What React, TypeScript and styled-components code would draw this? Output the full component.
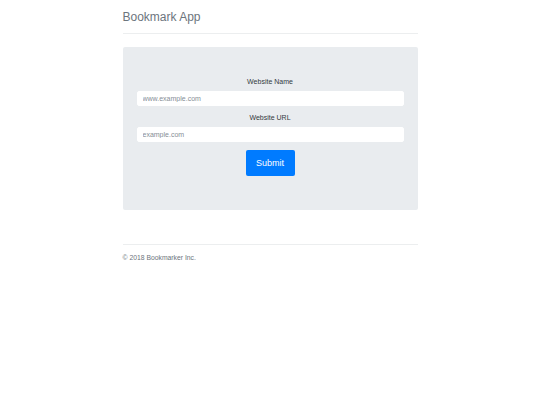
import styled, { createGlobalStyle } from "styled-components";

const GlobalStyle = createGlobalStyle`
  body {
    margin: 0;
    background: #fff;
    font-family: "Liberation Sans", Arial, sans-serif;
    color: #212529;
  }
`;

const Container = styled.div`
  width: 295px;
  margin: 0 auto;
`;

const Header = styled.header`
  padding: 9px 0 8px;
  border-bottom: 1px solid #eceeef;
  h3 {
    margin: 0;
    font-size: 12px;
    line-height: 16px;
    font-weight: 400;
    color: #6c757d;
  }
`;

const Jumbotron = styled.div`
  margin-top: 13px;
  padding: 30px 14px 34px;
  background-color: #e9ecef;
  border-radius: 2px;
`;

const Form = styled.form`
  display: flex;
  flex-direction: column;
  align-items: center;
`;

const FormGroup = styled.div`
  width: 100%;
  display: flex;
  flex-direction: column;
  align-items: center;
  & + & {
    margin-top: 7px;
  }
  label {
    font-size: 7px;
    line-height: 10px;
    margin-bottom: 4px;
    color: #343a40;
  }
  input {
    box-sizing: border-box;
    width: 100%;
    height: 15px;
    padding: 0 5px;
    border: 1px solid #fff;
    border-radius: 2px;
    background: #fff;
    font-family: inherit;
    font-size: 7px;
    outline: none;
    &::placeholder {
      color: #868e96;
    }
  }
`;

const SubmitButton = styled.button`
  margin-top: 8px;
  width: 49px;
  height: 26px;
  border: none;
  border-radius: 2px;
  background-color: #007bff;
  color: #fff;
  font-family: inherit;
  font-size: 9px;
  cursor: pointer;
`;

const Footer = styled.footer`
  margin-top: 34px;
  padding-top: 8px;
  border-top: 1px solid #eceeef;
  font-size: 6.8px;
  line-height: 10px;
  color: #6c757d;
`;

const App = () => {
  return (
    <>
      <GlobalStyle />
      <Container>
        <Header>
          <h3>Bookmark App</h3>
        </Header>
        <Jumbotron>
          <Form onSubmit={(e) => e.preventDefault()}>
            <FormGroup>
              <label htmlFor="siteName">Website Name</label>
              <input id="siteName" type="text" placeholder="www.example.com" />
            </FormGroup>
            <FormGroup>
              <label htmlFor="siteUrl">Website URL</label>
              <input id="siteUrl" type="text" placeholder="example.com" />
            </FormGroup>
            <SubmitButton type="submit">Submit</SubmitButton>
          </Form>
        </Jumbotron>
        <Footer>© 2018 Bookmarker Inc.</Footer>
      </Container>
    </>
  );
};

export default App;
